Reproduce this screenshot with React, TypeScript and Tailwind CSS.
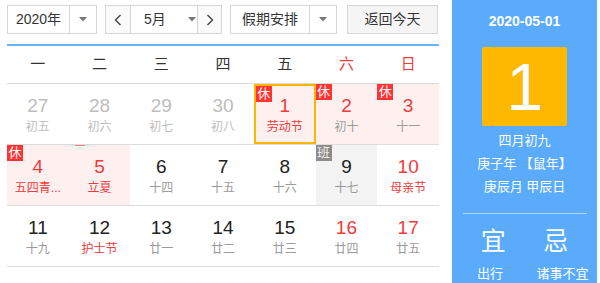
import React from 'react';

type Day = {
  n: number;
  lunar: string;
  tone: 'prev' | 'normal' | 'red';
  lunarRed?: boolean;
  rest?: boolean;
  work?: boolean;
  holiday?: boolean;
  today?: boolean;
  gray?: boolean;
};

const weeks: Day[][] = [
  [
    { n: 27, lunar: '初五', tone: 'prev' },
    { n: 28, lunar: '初六', tone: 'prev' },
    { n: 29, lunar: '初七', tone: 'prev' },
    { n: 30, lunar: '初八', tone: 'prev' },
    { n: 1, lunar: '劳动节', tone: 'red', lunarRed: true, rest: true, holiday: true, today: true },
    { n: 2, lunar: '初十', tone: 'red', rest: true, holiday: true },
    { n: 3, lunar: '十一', tone: 'red', rest: true, holiday: true },
  ],
  [
    { n: 4, lunar: '五四青...', tone: 'red', lunarRed: true, rest: true, holiday: true },
    { n: 5, lunar: '立夏', tone: 'red', lunarRed: true, holiday: true },
    { n: 6, lunar: '十四', tone: 'normal' },
    { n: 7, lunar: '十五', tone: 'normal' },
    { n: 8, lunar: '十六', tone: 'normal' },
    { n: 9, lunar: '十七', tone: 'normal', work: true, gray: true },
    { n: 10, lunar: '母亲节', tone: 'red', lunarRed: true },
  ],
  [
    { n: 11, lunar: '十九', tone: 'normal' },
    { n: 12, lunar: '护士节', tone: 'normal', lunarRed: true },
    { n: 13, lunar: '廿一', tone: 'normal' },
    { n: 14, lunar: '廿二', tone: 'normal' },
    { n: 15, lunar: '廿三', tone: 'normal' },
    { n: 16, lunar: '廿四', tone: 'red' },
    { n: 17, lunar: '廿五', tone: 'red' },
  ],
];

const weekdays = ['一', '二', '三', '四', '五', '六', '日'];

function Caret() {
  return (
    <svg width="8" height="5" viewBox="0 0 8 5" className="shrink-0">
      <path d="M0 0 L8 0 L4 4.5 Z" fill="#777" />
    </svg>
  );
}

function Chevron({ dir }: { dir: 'left' | 'right' }) {
  return (
    <svg width="8" height="12" viewBox="0 0 8 12">
      <path d={dir === 'left' ? 'M6.5 1 L1.5 6 L6.5 11' : 'M1.5 1 L6.5 6 L1.5 11'} stroke="#444" strokeWidth="1.4" fill="none" />
    </svg>
  );
}

function Cell({ d }: { d: Day }) {
  const numColor = d.tone === 'prev' ? 'text-[#bdbdbd]' : d.tone === 'red' ? 'text-[#ef3b3b]' : 'text-[#222]';
  const lunarColor = d.lunarRed ? 'text-[#ef3b3b]' : d.tone === 'prev' ? 'text-[#bdbdbd]' : 'text-[#9a9a9a]';
  const bg = d.holiday ? 'bg-[#fff0f0]' : d.gray ? 'bg-[#f3f3f3]' : 'bg-white';
  return (
    <div className={`relative h-[60px] ${bg} ${d.today ? 'border-2 border-[#ffb400]' : ''}`}>
      {d.rest && (
        <span className="absolute left-0 top-0 w-[16px] h-[16px] bg-[#f33] text-white text-[13px] leading-[16px] text-center">休</span>
      )}
      {d.work && (
        <span className="absolute left-0 top-0 w-[16px] h-[16px] bg-[#8c8c8c] text-[#eee] text-[13px] leading-[16px] text-center">班</span>
      )}
      {d.n === 5 && <span className="absolute left-[6px] top-0 w-[10px] h-[1px] bg-[#f88]" />}
      <div className={`flex flex-col items-center ${d.today ? 'pt-[9px]' : 'pt-[11px]'}`}>
        <span className={`text-[19px] leading-[22px] ${numColor}`}>{d.n}</span>
        <span className={`mt-[2px] text-[12px] leading-[16px] whitespace-nowrap ${lunarColor}`}>{d.lunar}</span>
      </div>
    </div>
  );
}

export default function App() {
  return (
    <div className="flex h-[283px] w-[600px] overflow-hidden bg-white text-[#333] font-['Liberation_Sans','Noto_Sans_CJK_SC',sans-serif]">
      <div className="ml-[7px] w-[432px] pt-[5px]">
        {/* toolbar */}
        <div className="flex h-[29px] text-[14px]">
          <div className="flex w-[90px] border border-[#d6d6d6] bg-white">
            <span className="flex-1 flex items-center justify-center">2020年</span>
            <span className="w-[27px] border-l border-[#d6d6d6] flex items-center justify-center"><Caret /></span>
          </div>
          <div className="ml-[8px] flex w-[117px] border border-[#d6d6d6] bg-white">
            <span className="w-[25px] border-r border-[#d6d6d6] flex items-center justify-center bg-[#fafafa]"><Chevron dir="left" /></span>
            <span className="flex-1 flex items-center pl-[13px] gap-[22px]">5月<Caret /></span>
            <span className="w-[24px] border-l border-[#d6d6d6] flex items-center justify-center bg-[#fafafa]"><Chevron dir="right" /></span>
          </div>
          <div className="ml-[8px] flex w-[107px] border border-[#d6d6d6] bg-white">
            <span className="flex-1 flex items-center justify-center">假期安排</span>
            <span className="w-[27px] border-l border-[#d6d6d6] flex items-center justify-center"><Caret /></span>
          </div>
          <div className="ml-[10px] w-[91px] border border-[#d6d6d6] bg-[#f5f5f5] flex items-center justify-center">返回今天</div>
        </div>
        <div className="mt-[10px] h-[2px] bg-[#69b3f7]" />
        {/* weekdays */}
        <div className="grid grid-cols-7 h-[38px] border-b border-[#dcdcdc] text-[15px]">
          {weekdays.map((w, i) => (
            <div key={w} className={`flex items-center justify-center ${i >= 5 ? 'text-[#ef3b3b]' : 'text-[#333]'}`}>{w}</div>
          ))}
        </div>
        {weeks.map((wk, i) => (
          <div key={i} className="grid grid-cols-7 border-b border-[#dcdcdc]">
            {wk.map(d => <Cell key={d.n} d={d} />)}
          </div>
        ))}
      </div>
      {/* side panel */}
      <div className="ml-auto mr-[3px] w-[145px] h-full bg-[#5aabfb] text-white flex flex-col items-center">
        <div className="mt-[12px] text-[14px] font-bold leading-[18px]">2020-05-01</div>
        <div className="mt-[17px] w-[85px] h-[84px] rounded-[2px] bg-[#ffb800] flex items-center justify-center text-[66px] leading-none font-light">1</div>
        <div className="mt-[3px] text-[13px] leading-[23px] text-center">
          <div>四月初九</div>
          <div>庚子年 【鼠年】</div>
          <div>庚辰月 甲辰日</div>
        </div>
        <div className="mt-[15px] w-[124px] h-[1px] bg-white/50" />
        <div className="mt-[12px] flex w-full justify-around px-[10px] text-[25px] leading-[30px]">
          <span>宜</span>
          <span>忌</span>
        </div>
        <div className="mt-[9px] flex w-full text-[13px] leading-[18px]">
          <span className="w-[76px] text-center">出行</span>
          <span className="flex-1 text-center">诸事不宜</span>
        </div>
      </div>
    </div>
  );
}
